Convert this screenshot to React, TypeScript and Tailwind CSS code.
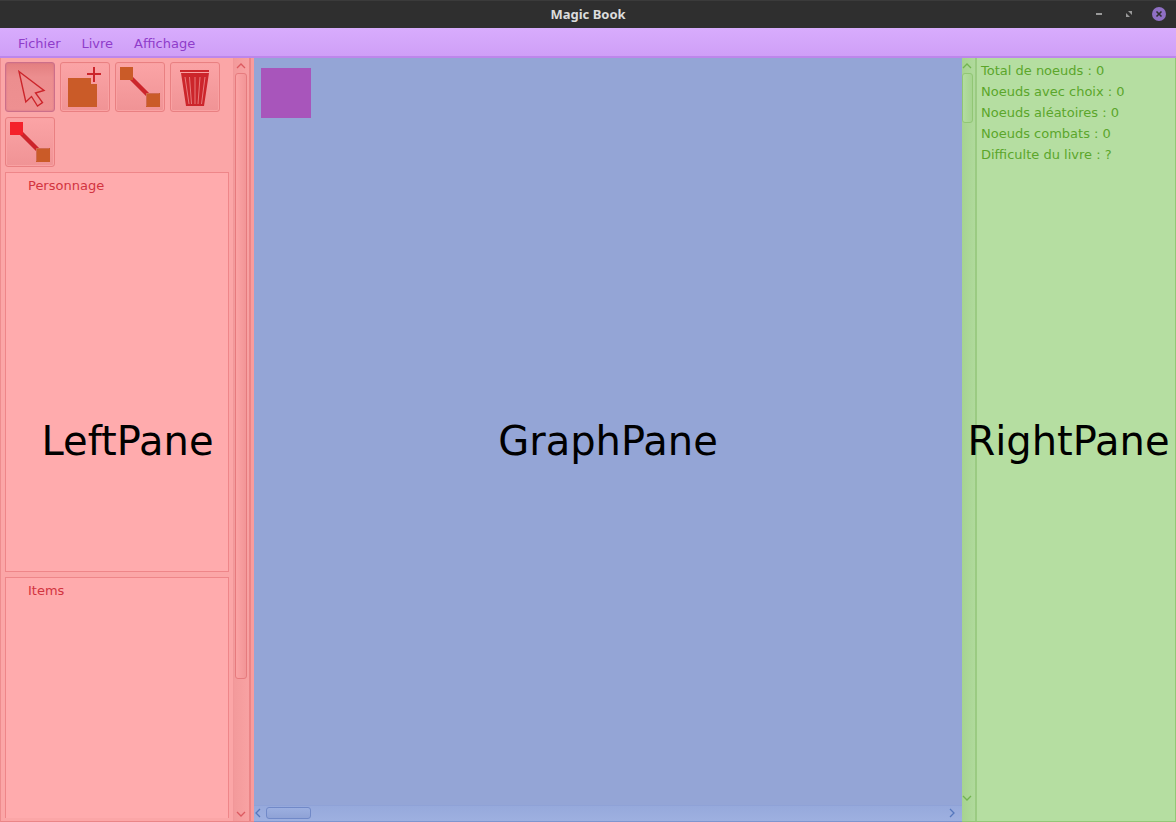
import React, { useState } from 'react';

type Tool = 'select' | 'node' | 'link' | 'delete' | 'first';

function CursorIcon() {
  return (
    <svg width="50" height="50" viewBox="0 0 50 50" fill="none" stroke="#cc252b" strokeWidth="1.4" aria-hidden="true">
      <path d="M14 9.5 L39 28.5 L30.5 31 L37.5 40.5 L32.5 44 L26.5 34.5 L20.8 40 Z" />
    </svg>
  );
}

function AddNodeIcon() {
  return (
    <svg width="50" height="50" viewBox="0 0 50 50" aria-hidden="true">
      <path d="M8 16H31V22H37V45H8Z" fill="#ca5b28" />
      <path d="M27 12H41M34 5V20" stroke="#cc252b" strokeWidth="2" />
    </svg>
  );
}

function LinkIcon({ start }: { start: string }) {
  return (
    <svg width="50" height="50" viewBox="0 0 50 50" aria-hidden="true">
      <path d="M15 15L35 35" stroke="#cc252b" strokeWidth="4.5" />
      <rect x="5" y="5" width="13" height="13" fill={start} />
      <rect x="31" y="31" width="14" height="14" fill="#ca5b28" />
      <path d="M31.5 44V31.5H44" fill="none" stroke="#d06a50" />
    </svg>
  );
}

function TrashIcon() {
  return (
    <svg width="50" height="50" viewBox="0 0 50 50" aria-hidden="true">
      <path d="M10 8H39V10H10ZM11 11H39L34 44H16Z" fill="#cc252b" />
      <path
        d="M15 15L19 42M19.5 15L21.5 42M25 15V42M30 15L28 42M35 15L31.5 42"
        stroke="#e87a7d"
        strokeWidth="1"
      />
    </svg>
  );
}

const tools: { id: Tool; label: string; icon: React.ReactNode }[] = [
  { id: 'select', label: 'Sélectionner', icon: <CursorIcon /> },
  { id: 'node', label: 'Ajouter un noeud', icon: <AddNodeIcon /> },
  { id: 'link', label: 'Ajouter un lien', icon: <LinkIcon start="#ca5b28" /> },
  { id: 'delete', label: 'Supprimer', icon: <TrashIcon /> },
  { id: 'first', label: 'Premier noeud', icon: <LinkIcon start="#f4212b" /> },
];

const stats = [
  'Total de noeuds : 0',
  'Noeuds avec choix : 0',
  'Noeuds aléatoires : 0',
  'Noeuds combats : 0',
  'Difficulte du livre : ?',
];

const arrows = {
  up: 'M1 6L5 2L9 6',
  down: 'M1 2L5 6L9 2',
  left: 'M6 1L2 5L6 9',
  right: 'M2 1L6 5L2 9',
};

function Arrow({ direction, className }: { direction: keyof typeof arrows; className: string }) {
  const vertical = direction === 'up' || direction === 'down';
  return (
    <button type="button" aria-label={direction} className={`flex shrink-0 items-center justify-center ${className}`}>
      <svg
        width={vertical ? 10 : 8}
        height={vertical ? 8 : 10}
        viewBox={vertical ? '0 0 10 8' : '0 0 8 10'}
        fill="none"
        stroke="currentColor"
        strokeWidth="1.3"
      >
        <path d={arrows[direction]} />
      </svg>
    </button>
  );
}

function PaneName({ children }: { children: string }) {
  return (
    <div className="pointer-events-none absolute inset-0 flex items-center justify-center pt-0.5 text-[40px] leading-none whitespace-nowrap text-black">
      {children}
    </div>
  );
}

function TitleBar() {
  return (
    <header className="grid h-7 shrink-0 grid-cols-[1fr_auto_1fr] items-center border-t border-[#3b3b3b] bg-[#2f2f2f] px-[9px] pb-0.5">
      <h1 className="col-start-2 font-['Noto_Sans',sans-serif] text-[13px] leading-5 font-bold text-[#dcdcdc]">
        Magic Book
      </h1>
      <div className="flex items-center justify-end gap-3.5 text-[#9a9a9a]">
        <button type="button" aria-label="Réduire" className="size-4">
          <svg width="16" height="16" viewBox="0 0 16 16">
            <path d="M5 7H11V9H5Z" fill="currentColor" />
          </svg>
        </button>
        <button type="button" aria-label="Agrandir" className="size-4">
          <svg width="16" height="16" viewBox="0 0 16 16">
            <path d="M7 5H11V9ZM5 7V11H9Z" fill="currentColor" />
          </svg>
        </button>
        <button type="button" aria-label="Fermer" className="size-4">
          <svg width="16" height="16" viewBox="0 0 16 16">
            <circle cx="8" cy="8" r="7" fill="#8f6fc4" />
            <path d="M5.5 5.5L10.5 10.5M10.5 5.5L5.5 10.5" stroke="#2f2f2f" strokeWidth="1.6" />
          </svg>
        </button>
      </div>
    </header>
  );
}

function LeftPane() {
  const [active, setActive] = useState<Tool>('select');
  return (
    <aside className="relative flex w-[254px] shrink-0 border-b border-l border-b-[#ea8587] border-l-[#ee8c8e] bg-[#fba6a7]">
      <div className="flex min-w-0 flex-1 flex-col gap-[5px] px-1 pt-1 pb-[3px]">
        <div className="flex flex-wrap gap-[5px]">
          {tools.map((tool) => (
            <button
              key={tool.id}
              type="button"
              aria-label={tool.label}
              aria-pressed={active === tool.id}
              onClick={() => setActive(tool.id)}
              className={`relative size-[50px] rounded-[3px] border ${
                active === tool.id
                  ? 'border-[#cc6f8a] bg-linear-to-b from-[#e37f80] via-[#ec8e8f] via-30% to-[#ee9091] shadow-[inset_0_0_2px_#cc6f8a]'
                  : 'border-[#e98082] bg-linear-to-b from-[#fba4a6] to-[#f09395] shadow-[inset_0_0_0_1px_#f9a2a3]'
              }`}
            >
              <span className="absolute -inset-px">{tool.icon}</span>
            </button>
          ))}
        </div>
        <section className="h-[400px] shrink-0 border border-[#ee8689] bg-[#ffabad] px-[22px] pt-[3px] text-[#d2343f]">
          <h2 className="leading-5">Personnage</h2>
        </section>
        <section className="min-h-0 flex-1 border border-b-0 border-[#ee8689] bg-[#ffabad] px-[22px] pt-[3px] text-[#d2343f]">
          <h2 className="leading-5">Items</h2>
        </section>
      </div>
      <div className="flex w-4 shrink-0 flex-col border-l border-[#f19799] bg-linear-to-r from-[#f39a9b] to-[#f8a2a3] px-px text-[#dc5a60]">
        <Arrow direction="up" className="h-[15px] w-3" />
        <div className="min-h-0 flex-1">
          <div className="h-[82.7%] w-3 rounded-[3px] border border-[#e67b7e] bg-linear-to-r from-[#fba4a5] to-[#f29597]" />
        </div>
        <Arrow direction="down" className="h-[15px] w-3" />
      </div>
      <div className="w-[5px] shrink-0 border-l-2 border-[#ea8587] bg-[#f89c9d]" />
      <PaneName>LeftPane</PaneName>
    </aside>
  );
}

function GraphPane() {
  return (
    <main className="relative flex min-w-0 flex-1 flex-col border-b border-[#7f95cf] bg-[#94a5d6]">
      <div className="relative min-h-0 flex-1">
        <div className="absolute top-2.5 left-[7px] size-[50px] bg-[#a855bb]" />
      </div>
      <div className="flex h-4 shrink-0 items-center border-t border-[#8fa2d7] bg-linear-to-b from-[#96a9dc] to-[#9eb0e0] pb-0.5 text-[#5577bd]">
        <Arrow direction="left" className="h-3 w-2" />
        <div className="min-w-0 flex-1 px-1">
          <div className="h-3 w-[45px] rounded-[3px] border border-[#7189c8] bg-linear-to-b from-[#9cafe0] to-[#8fa2d6]" />
        </div>
        <Arrow direction="right" className="mr-1.5 h-3 w-2" />
      </div>
      <PaneName>GraphPane</PaneName>
    </main>
  );
}

function RightPane() {
  return (
    <aside className="relative flex w-[214px] shrink-0 border-r border-b border-[#93c776] bg-[#b5dea1]">
      <div className="flex w-[13px] shrink-0 flex-col bg-linear-to-r from-[#a6d390] to-[#b0da9c] pb-4 text-[#72b451]">
        <Arrow direction="up" className="h-[15px] w-2.5" />
        <div className="min-h-0 flex-1">
          <div className="h-[50px] w-[11px] rounded-[3px] border border-[#91c675] bg-linear-to-r from-[#b3dda0] to-[#a6d48f]" />
        </div>
        <Arrow direction="down" className="h-[15px] w-2.5" />
      </div>
      <div className="min-w-0 flex-1 border-l-2 border-[#9bcb82] pt-0.5 pl-1 text-[#5ba62b]">
        <ul>
          {stats.map((line) => (
            <li key={line} className="leading-[21px]">
              {line}
            </li>
          ))}
        </ul>
      </div>
      <PaneName>RightPane</PaneName>
    </aside>
  );
}

export default function App() {
  return (
    <div className="flex h-screen flex-col overflow-hidden font-['DejaVu_Sans',sans-serif] text-[13px]">
      <TitleBar />
      <nav className="flex h-[30px] shrink-0 items-center gap-[21px] border-b-2 border-[#bd86eb] bg-linear-to-b from-[#d8acfd] to-[#cf9ff7] px-[18px] pt-[3px] text-[#8f3cca]">
        <button type="button">Fichier</button>
        <button type="button">Livre</button>
        <button type="button">Affichage</button>
      </nav>
      <div className="flex min-h-0 flex-1">
        <LeftPane />
        <GraphPane />
        <RightPane />
      </div>
    </div>
  );
}
